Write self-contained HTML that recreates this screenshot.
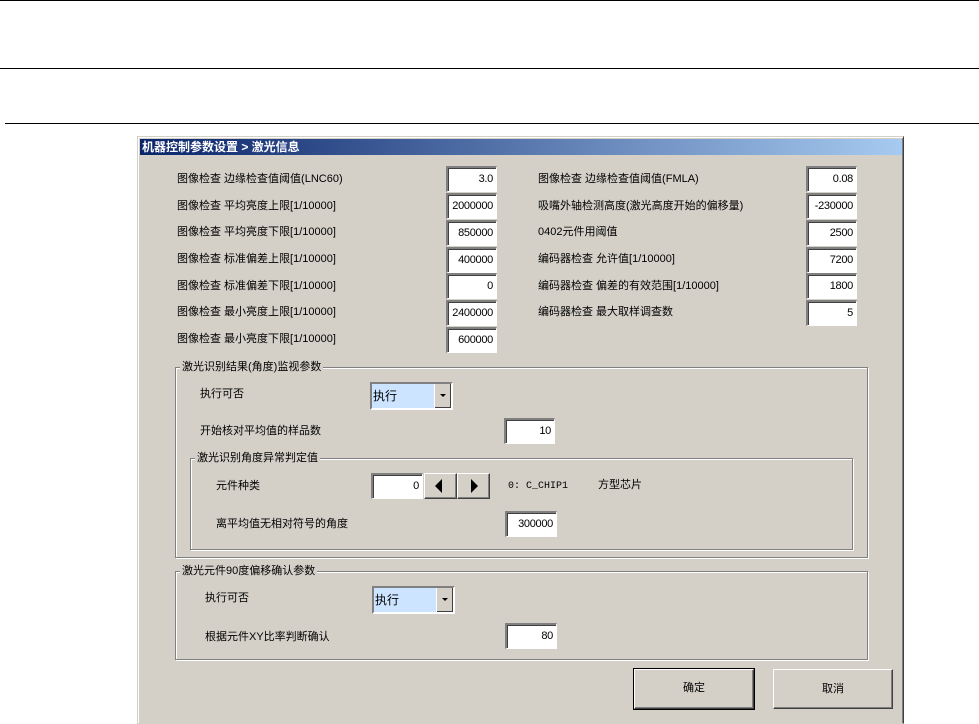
<!DOCTYPE html><html><head><meta charset="utf-8"><style>
body{margin:0;width:979px;height:724px;background:#fff;position:relative;overflow:hidden;font-family:"Liberation Sans","Noto Sans CJK SC",sans-serif;font-size:11px;color:#000}
.a{position:absolute}
.hl{position:absolute;height:1px;background:#000}
.lb{position:absolute;white-space:nowrap;line-height:13px}
.in{position:absolute;background:#fff;border-top:2px solid #808080;border-left:2px solid #808080;border-right:1px solid #fff;border-bottom:1px solid #fff;box-shadow:inset 1px 1px 0 #404040;box-sizing:border-box;text-align:right;padding-right:3px;font-family:"Liberation Sans",sans-serif;font-size:11px;letter-spacing:-0.3px}
.gb{position:absolute;border:1px solid #808080;box-shadow:1px 1px 0 #fff, inset 1px 1px 0 #fff;box-sizing:border-box}
.gt{position:absolute;background:#d4d0c8;padding:0 2px;white-space:nowrap;line-height:13px}
.cb{position:absolute;box-sizing:border-box;border:2px solid #808080;border-right-color:#fff;border-bottom-color:#fff;background:#cce4ff;font-size:12px;padding:3px 0 0 1px}
.cb .d{position:absolute;right:0;top:0;width:16px;height:100%;background:#d4d0c8;border-left:1px solid #fff;box-shadow:inset -1px -1px 0 #404040}
.cb .d:after{content:"";position:absolute;left:5px;top:10px;border:3px solid transparent;border-top:3px solid #000;border-bottom:0}
.bt{position:absolute;box-sizing:border-box;background:#d4d0c8;border:1px solid #fff;border-right-color:#404040;border-bottom-color:#404040;box-shadow:inset -1px -1px 0 #808080;text-align:center}
</style></head><body>
<div class="hl" style="left:0;top:0;width:979px"></div>
<div class="hl" style="left:0;top:68px;width:979px"></div>
<div class="hl" style="left:5px;top:123px;width:974px"></div>
<div class="a" style="left:137px;top:136px;width:767px;height:588px;background:#d4d0c8;border:1px solid #d4d0c8;border-right:1px solid #404040;box-shadow:inset 1px 1px 0 #fff, inset -1px 0 0 #808080;box-sizing:border-box"></div>
<div class="a" style="left:140px;top:139px;width:762px;height:16px;background:linear-gradient(90deg,#0a246a,#a6caf0);color:#fff;font-weight:bold;font-size:12px;line-height:16px;padding-left:2px;box-sizing:border-box">机器控制参数设置 &gt; 激光信息</div>

<div class="lb" style="left:177px;top:173px">图像检查 边缘检查值阈值(LNC60)</div>
<div class="lb" style="left:177px;top:200px">图像检查 平均亮度上限[1/10000]</div>
<div class="lb" style="left:177px;top:226px">图像检查 平均亮度下限[1/10000]</div>
<div class="lb" style="left:177px;top:253px">图像检查 标准偏差上限[1/10000]</div>
<div class="lb" style="left:177px;top:280px">图像检查 标准偏差下限[1/10000]</div>
<div class="lb" style="left:177px;top:306px">图像检查 最小亮度上限[1/10000]</div>
<div class="lb" style="left:177px;top:333px">图像检查 最小亮度下限[1/10000]</div>
<div class="in" style="left:446px;top:166px;width:51px;height:26px;line-height:22px">3.0</div>
<div class="in" style="left:446px;top:193px;width:51px;height:26px;line-height:22px">2000000</div>
<div class="in" style="left:446px;top:220px;width:51px;height:26px;line-height:22px">850000</div>
<div class="in" style="left:446px;top:247px;width:51px;height:26px;line-height:22px">400000</div>
<div class="in" style="left:446px;top:273px;width:51px;height:26px;line-height:22px">0</div>
<div class="in" style="left:446px;top:300px;width:51px;height:26px;line-height:22px">2400000</div>
<div class="in" style="left:446px;top:327px;width:51px;height:26px;line-height:22px">600000</div>

<div class="lb" style="left:538px;top:173px">图像检查 边缘检查值阈值(FMLA)</div>
<div class="lb" style="left:538px;top:200px">吸嘴外轴检测高度(激光高度开始的偏移量)</div>
<div class="lb" style="left:538px;top:226px">0402元件用阈值</div>
<div class="lb" style="left:538px;top:253px">编码器检查 允许值[1/10000]</div>
<div class="lb" style="left:538px;top:280px">编码器检查 偏差的有效范围[1/10000]</div>
<div class="lb" style="left:538px;top:306px">编码器检查 最大取样调查数</div>
<div class="in" style="left:806px;top:166px;width:51px;height:26px;line-height:22px">0.08</div>
<div class="in" style="left:806px;top:193px;width:51px;height:26px;line-height:22px">-230000</div>
<div class="in" style="left:806px;top:220px;width:51px;height:26px;line-height:22px">2500</div>
<div class="in" style="left:806px;top:247px;width:51px;height:26px;line-height:22px">7200</div>
<div class="in" style="left:806px;top:273px;width:51px;height:26px;line-height:22px">1800</div>
<div class="in" style="left:806px;top:300px;width:51px;height:26px;line-height:22px">5</div>

<div class="gb" style="left:175px;top:367px;width:693px;height:191px"></div>
<div class="gt" style="left:180px;top:361px">激光识别结果(角度)监视参数</div>
<div class="lb" style="left:200px;top:388px">执行可否</div>
<div class="cb" style="left:370px;top:382px;width:83px;height:28px">执行<div class="d"></div></div>
<div class="lb" style="left:200px;top:425px">开始核对平均值的样品数</div>
<div class="in" style="left:504px;top:418px;width:51px;height:26px;line-height:22px">10</div>

<div class="gb" style="left:190px;top:458px;width:663px;height:92px"></div>
<div class="gt" style="left:195px;top:452px">激光识别角度异常判定值</div>
<div class="lb" style="left:216px;top:480px">元件种类</div>
<div class="in" style="left:371px;top:473px;width:52px;height:26px;line-height:22px">0</div>
<div class="bt" style="left:424px;top:473px;width:33px;height:26px"><svg width="31" height="24"><path d="M10 12L17 5V19Z" fill="#000"/></svg></div>
<div class="bt" style="left:457px;top:473px;width:33px;height:26px"><svg width="31" height="24"><path d="M20 12L13 5V19Z" fill="#000"/></svg></div>
<div class="lb" style="left:508px;top:480px;font-family:'Liberation Mono',monospace;font-size:10px">0: C_CHIP1</div>
<div class="lb" style="left:598px;top:479px">方型芯片</div>
<div class="lb" style="left:216px;top:518px">离平均值无相对符号的角度</div>
<div class="in" style="left:505px;top:511px;width:52px;height:26px;line-height:22px">300000</div>

<div class="gb" style="left:175px;top:571px;width:693px;height:89px"></div>
<div class="gt" style="left:180px;top:565px">激光元件90度偏移确认参数</div>
<div class="lb" style="left:205px;top:592px">执行可否</div>
<div class="cb" style="left:372px;top:586px;width:83px;height:28px">执行<div class="d"></div></div>
<div class="lb" style="left:205px;top:631px">根据元件XY比率判断确认</div>
<div class="in" style="left:505px;top:623px;width:52px;height:26px;line-height:22px">80</div>

<div class="bt" style="left:634px;top:669px;width:120px;height:40px;line-height:36px;outline:1px solid #000">确定</div>
<div class="bt" style="left:773px;top:669px;width:120px;height:40px;line-height:38px">取消</div>
</body></html>
